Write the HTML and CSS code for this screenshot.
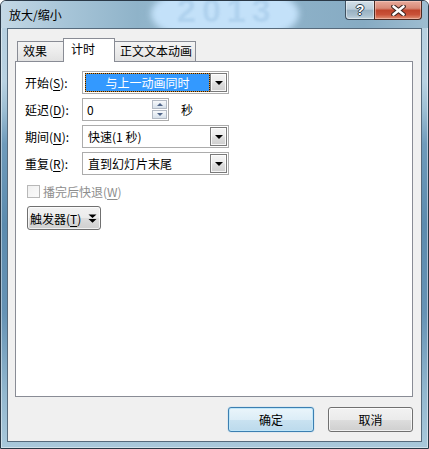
FILE: index.html
```html
<!DOCTYPE html>
<html lang="zh-CN">
<head>
<meta charset="utf-8">
<title>放大/缩小</title>
<link rel="stylesheet" href="styles.css">
</head>
<body>
<div class="window">
  <div class="titlebar">
    <div class="aero-glow" aria-hidden="true"></div>
    <span class="watermark" aria-hidden="true">2013</span>
    <span class="title">放大/缩小</span>
    <div class="caption">
      <div class="cap-btn help"><span>?</span></div>
      <div class="cap-btn close">
        <svg width="15" height="11" viewBox="0 0 15 11">
          <path d="M2.5 1.5 L12.5 9.5 M12.5 1.5 L2.5 9.5" stroke="#3b2420" stroke-width="4.6" stroke-linecap="round"/>
          <path d="M2.5 1.5 L12.5 9.5 M12.5 1.5 L2.5 9.5" stroke="#ffffff" stroke-width="2.6" stroke-linecap="round"/>
        </svg>
      </div>
    </div>
  </div>
  <div class="client">
    <div class="tabs">
      <div class="tab t1">效果</div>
      <div class="tab active t2">计时</div>
      <div class="tab t3">正文文本动画</div>
    </div>
    <div class="panel">
      <div class="row">
        <span class="lbl">开始(<u>S</u>):</span>
        <div class="combo">
          <div class="combo-field selected">与上一动画同时</div>
          <div class="dd"><i class="arrow"></i></div>
        </div>
      </div>
      <div class="row">
        <span class="lbl">延迟(<u>D</u>):</span>
        <div class="spin">
          <span class="spin-val">0</span>
          <div class="spin-btns">
            <div class="sb"><i class="up"></i></div>
            <div class="sb"><i class="down"></i></div>
          </div>
        </div>
        <span class="unit">秒</span>
      </div>
      <div class="row">
        <span class="lbl">期间(<u>N</u>):</span>
        <div class="combo">
          <div class="combo-field">快速(1 秒)</div>
          <div class="dd"><i class="arrow"></i></div>
        </div>
      </div>
      <div class="row">
        <span class="lbl">重复(<u>R</u>):</span>
        <div class="combo">
          <div class="combo-field">直到幻灯片末尾</div>
          <div class="dd"><i class="arrow"></i></div>
        </div>
      </div>
      <div class="check-row">
        <span class="checkbox"></span>
        <span class="check-lbl">播完后快退(<u>W</u>)</span>
      </div>
      <div class="trigger">
        <span>触发器(<u>T</u>)</span>
        <svg width="9" height="9" viewBox="0 0 9 9"><path d="M0.5 0.5 H8.5 L4.5 4 Z M0.5 5 H8.5 L4.5 8.8 Z" fill="#000"/></svg>
      </div>
    </div>
    <div class="footer">
      <button class="btn default">确定</button>
      <button class="btn">取消</button>
    </div>
  </div>
</div>
</body>
</html>
```
FILE: styles.css
```css
* { box-sizing: border-box; }
html, body {
  margin: 0;
  width: 429px;
  height: 449px;
  overflow: hidden;
  background: #ffffff;
}
body {
  font-family: "Noto Sans CJK SC", "Microsoft YaHei", "Liberation Sans", sans-serif;
  font-size: 12px;
  color: #000;
}
u { text-decoration: underline; text-underline-offset: 2px; }

.window {
  width: 429px;
  height: 449px;
  border: 1px solid #2a3846;
  border-radius: 6px 6px 0 0;
  display: flex;
  flex-direction: column;
  overflow: hidden;
  background: linear-gradient(180deg, #b6cfdf 0%, #b9d2e2 18%, #9fc0d5 24%, #6f9bbb 32%, #5c8bae 50%, #6693b5 70%, #93b8cf 88%, #a9c8db 100%);
  box-shadow: inset 0 0 0 1px rgba(255,255,255,0.45);
}

.titlebar {
  height: 27px;
  flex: none;
  display: flex;
  align-items: flex-start;
  padding: 0 6px 0 8px;
  position: relative;
  overflow: hidden;
  background: linear-gradient(90deg, #c4d8e5 0%, #a7c5d8 15%, #8fb3c9 32%, #9fc1d6 50%, #8db1c8 68%, #86abc3 85%, #9ebdd1 100%);
}
.aero-glow {
  position: absolute;
  left: 150px;
  top: -10px;
  width: 148px;
  height: 46px;
  border-radius: 30% / 50%;
  background: #c3e1f9;
  filter: blur(3px);
}
.watermark {
  position: absolute;
  left: 176px;
  top: -6px;
  font-family: "Liberation Sans", sans-serif;
  font-weight: bold;
  font-size: 34px;
  line-height: 30px;
  letter-spacing: 6px;
  color: #b0d2ee;
  filter: blur(1.2px);
}
.title {
  position: relative;
  margin-top: 5px;
  line-height: 17px;
  color: #000;
}
.caption {
  margin-left: auto;
  display: flex;
  position: relative;
}
.cap-btn {
  height: 19px;
  display: flex;
  align-items: center;
  justify-content: center;
  border: 1px solid #3f5160;
  border-top: none;
}
.help {
  width: 29px;
  border-right: none;
  border-radius: 0 0 0 4px;
  background: linear-gradient(180deg, #d3e0e8 0%, #bccdd9 45%, #98b1c2 52%, #a9bfce 80%, #c3d4df 100%);
  box-shadow: inset 0 0 0 1px rgba(255,255,255,0.45);
}
.help span {
  font-family: "Liberation Sans", sans-serif;
  font-weight: bold;
  font-size: 14px;
  line-height: 14px;
  color: #fff;
  text-shadow: 1px 0 0 #2e3f4c, -1px 0 0 #2e3f4c, 0 1px 0 #2e3f4c, 0 -1px 0 #2e3f4c;
}
.close {
  width: 48px;
  border-color: #4d2a22;
  border-radius: 0 0 4px 0;
  background: linear-gradient(180deg, #e8ab9c 0%, #d88a77 40%, #c0452c 52%, #c95138 75%, #e09074 100%);
  box-shadow: inset 0 0 0 1px rgba(255,220,210,0.45);
}

.client {
  flex: 1;
  margin: 0 6px 6px 6px;
  border: 1px solid #566a7c;
  background: #f0f0f0;
  display: flex;
  flex-direction: column;
  padding: 9px 8px 0 7px;
}

.tabs {
  display: flex;
  align-items: flex-end;
  height: 23px;
  padding-left: 2px;
  flex: none;
}
.tab {
  height: 20px;
  border: 1px solid #898c95;
  border-bottom: none;
  background: linear-gradient(180deg, #f4f4f4 0%, #ececec 50%, #e2e2e2 100%);
  line-height: 18px;
  white-space: nowrap;
}
.t1 { width: 47px; padding-left: 5px; }
.t2 { width: 52px; padding-left: 7px; margin-left: -1px; }
.t3 { width: 82px; padding-left: 5px; margin-left: -1px; }
.tab.active {
  position: relative;
  z-index: 1;
  height: 24px;
  margin-bottom: -1px;
  background: #ffffff;
  line-height: 17px;
  padding-top: 1px;
}

.panel {
  height: 336px;
  flex: none;
  border: 1px solid #898c95;
  background: #ffffff;
  padding: 9px 0 0 9px;
  display: flex;
  flex-direction: column;
}

.row {
  display: flex;
  align-items: center;
  height: 23px;
  margin-bottom: 4px;
}
.lbl {
  width: 57px;
  flex: none;
  line-height: 17px;
}

.combo {
  width: 147px;
  height: 23px;
  border: 1px solid #acacac;
  padding: 1px;
  display: flex;
  background: #fff;
}
.combo-field {
  flex: 1;
  margin-left: 1px;
  line-height: 19px;
  padding-left: 3px;
  white-space: nowrap;
}
.combo-field.selected {
  color: #fff;
  text-align: center;
  padding-left: 0;
  border: 1px dotted #1a1a1a;
  line-height: 17px;
  background: linear-gradient(#3399ff, #3399ff) padding-box, linear-gradient(#d88e2e, #d88e2e) border-box;
}
.dd {
  width: 17px;
  height: 19px;
  flex: none;
  border: 1px solid #7a7a7a;
  background: linear-gradient(180deg, #f6f6f6 0%, #ececec 45%, #dedede 55%, #cfcfcf 100%);
  box-shadow: inset 0 0 0 1px rgba(255,255,255,0.8);
  display: flex;
  align-items: center;
  justify-content: center;
}
.arrow {
  width: 0;
  height: 0;
  border-left: 4px solid transparent;
  border-right: 4px solid transparent;
  border-top: 4px solid #000;
  margin-top: 1px;
}

.spin {
  width: 87px;
  height: 23px;
  border: 1px solid #acacac;
  background: #fff;
  display: flex;
  align-items: center;
  padding: 1px;
}
.spin-val {
  flex: 1;
  padding-left: 3px;
  line-height: 17px;
}
.spin-btns {
  display: flex;
  flex-direction: column;
  gap: 1px;
}
.sb {
  width: 15px;
  height: 9px;
  border: 1px solid #b3bac4;
  background: linear-gradient(180deg, #f7f9fb 0%, #e4ebf2 60%, #d6e0ea 100%);
  display: flex;
  align-items: center;
  justify-content: center;
}
.sb i {
  width: 0;
  height: 0;
  border-left: 3px solid transparent;
  border-right: 3px solid transparent;
}
.sb .up { border-bottom: 3px solid #4f6488; }
.sb .down { border-top: 3px solid #4f6488; }
.unit {
  margin-left: 12px;
  line-height: 17px;
}

.check-row {
  display: flex;
  align-items: center;
  margin-top: 4px;
  margin-left: 2px;
  height: 17px;
}
.checkbox {
  width: 13px;
  height: 13px;
  border: 1px solid #b8b8b8;
  background: linear-gradient(135deg, #f0f0f0, #fafafa);
}
.check-lbl {
  margin-left: 3px;
  color: #8d8d8d;
  line-height: 17px;
}

.trigger {
  margin-top: 6px;
  margin-left: 2px;
  width: 74px;
  height: 24px;
  border: 1px solid #707070;
  border-radius: 3px;
  background: linear-gradient(180deg, #f2f2f2 0%, #ebebeb 50%, #dddddd 52%, #cfcfcf 100%);
  box-shadow: inset 0 0 0 1px rgba(255,255,255,0.7);
  display: flex;
  align-items: center;
  padding-left: 2px;
  gap: 7px;
  line-height: 17px;
}

.footer {
  display: flex;
  justify-content: flex-end;
  gap: 14px;
  margin-top: 10px;
}
.btn {
  font-family: inherit;
  font-size: 12px;
  color: #000;
  width: 85px;
  height: 25px;
  padding: 0;
  border: 1px solid #707070;
  border-radius: 3px;
  background: linear-gradient(180deg, #f2f2f2 0%, #ebebeb 50%, #dddddd 52%, #cfcfcf 100%);
  box-shadow: inset 0 0 0 1px rgba(255,255,255,0.7);
  line-height: 17px;
}
.btn.default {
  width: 86px;
  border-color: #3c7fb1;
  background: linear-gradient(180deg, #eaf5fb 0%, #dcedf7 50%, #c9e2f1 52%, #bcdaec 100%);
  box-shadow: inset 0 0 0 1px #bfe6f9, 0 0 1px #48a6e0;
}
```
